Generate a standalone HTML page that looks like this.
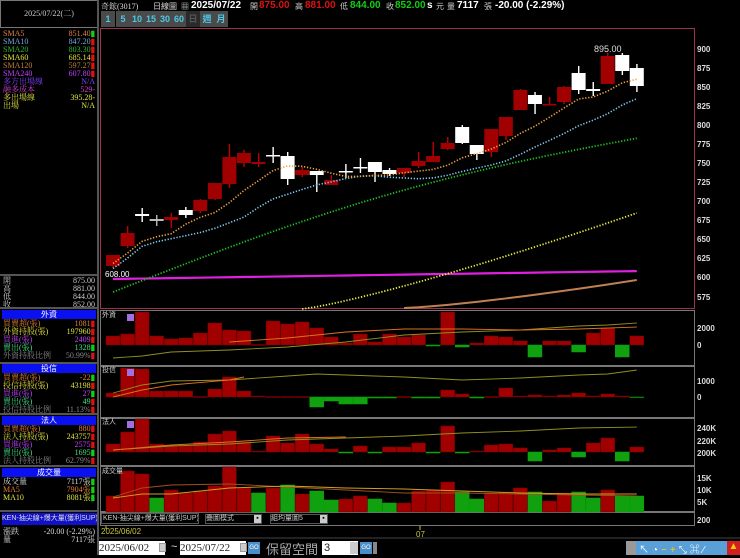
<!DOCTYPE html>
<html><head><meta charset="utf-8"><style>
*{margin:0;padding:0;box-sizing:border-box}
body{width:740px;height:555px;background:#000;overflow:hidden;position:relative;font-family:"Liberation Sans","Noto Sans CJK TC",sans-serif;font-size:8px;color:#ddd}
.a{position:absolute;white-space:nowrap}
.row{position:absolute;left:3px;width:92px;height:8px;line-height:8px;font-size:8px;font-family:"Liberation Serif","Noto Serif CJK SC",serif}
.row span{position:absolute;right:0}
.hd{position:absolute;left:2px;width:94px;height:9px;background:#0a10f0;color:#fff;text-align:center;font-size:8px;line-height:9px}
.sep{position:absolute;left:0;width:98px;height:2px;background:#555}
.btn{position:absolute;top:11px;height:16px;width:14px;background:#4a4a4a;color:#4ec8e8;font-size:9px;font-weight:bold;text-align:center;line-height:16px}
</style></head><body>
<div class="a" style="left:0;top:0;width:98px;height:28px;border:1px solid #777;color:#ccc;font-family:'Liberation Serif','Noto Serif CJK SC',serif;font-size:8px;text-align:center;line-height:26px">2025/07/22(二)</div>
<div class="a" style="left:97px;top:0;width:2px;height:555px;background:#555"></div>
<div id="left"></div>
<div class="sep" style="top:274px"></div>
<div class="sep" style="top:307px"></div>
<div class="sep" style="top:362px"></div>
<div class="sep" style="top:413px"></div>
<div class="sep" style="top:465px"></div>
<div class="sep" style="top:510px"></div>
<div class="hd" style="top:310px">外資</div>
<div class="hd" style="top:364px">投信</div>
<div class="hd" style="top:416px">法人</div>
<div class="hd" style="top:468px">成交量</div>
<div class="a" style="left:2px;top:513px;width:95px;height:12px;background:#1010c8;color:#ddd;font-size:7px;line-height:12px;overflow:hidden">KEN-抽尖線+爆大量(獲利SUP)</div>
<div class="a" style="left:101px;top:1px;font-size:8px;color:#ddd;font-family:'Liberation Serif','Noto Serif CJK SC',serif">奇鋐(3017)</div>
<div class="a" style="left:153px;top:1px;font-size:8px;color:#ddd">日線圖</div>
<div class="a" style="left:181px;top:1px;font-size:8px;color:#ddd">▦</div>
<div class="a" style="left:191px;top:0px;font-size:10px;font-weight:bold;color:#fff">2025/07/22</div>
<div class="a" style="left:250px;top:1px;font-size:8px;color:#ccc">開</div>
<div class="a" style="left:259px;top:0;font-size:10px;font-weight:bold;color:#e01010">875.00</div>
<div class="a" style="left:295px;top:1px;font-size:8px;color:#ccc">高</div>
<div class="a" style="left:305px;top:0;font-size:10px;font-weight:bold;color:#e01010">881.00</div>
<div class="a" style="left:340px;top:1px;font-size:8px;color:#ccc">低</div>
<div class="a" style="left:350px;top:0;font-size:10px;font-weight:bold;color:#10d010">844.00</div>
<div class="a" style="left:386px;top:1px;font-size:8px;color:#ccc">收</div>
<div class="a" style="left:395px;top:0;font-size:10px;font-weight:bold;color:#10d010">852.00</div>
<div class="a" style="left:427px;top:0;font-size:10px;font-weight:bold;color:#fff">s</div>
<div class="a" style="left:436px;top:1px;font-size:8px;color:#ccc">元</div>
<div class="a" style="left:447px;top:1px;font-size:8px;color:#ccc">量</div>
<div class="a" style="left:457px;top:0;font-size:10px;font-weight:bold;color:#fff">7117</div>
<div class="a" style="left:484px;top:1px;font-size:8px;color:#ccc">張</div>
<div class="a" style="left:495px;top:0;font-size:10px;font-weight:bold;color:#fff">-20.00 (-2.29%)</div>
<div class="btn" style="left:101px">1</div><div class="btn" style="left:116px">5</div>
<div class="btn" style="left:130px">10</div><div class="btn" style="left:144px">15</div>
<div class="btn" style="left:158px">30</div><div class="btn" style="left:172px">60</div>
<div class="btn" style="left:186px;background:#2a2a2a;color:#555">日</div>
<div class="btn" style="left:200px">週</div><div class="btn" style="left:214px">月</div>
<svg id="ch" class="a" style="left:0;top:0" width="740" height="555"></svg>
<div class="a" style="left:101px;top:513px;width:98px;height:11px;border:1px solid #555;color:#ccc;font-size:7px;line-height:9px;padding-left:1px;overflow:hidden">KEN-抽尖線+爆大量(獲利SUP)</div>
<div class="a" style="left:205px;top:514px;width:57px;height:10px;border:1px solid #555;color:#ccc;font-size:7px;line-height:8px">疊圖模式 <span style="float:right;background:#ccc;color:#000;width:7px;text-align:center">▪</span></div>
<div class="a" style="left:270px;top:514px;width:58px;height:10px;border:1px solid #555;color:#ccc;font-size:7px;line-height:8px">組均量圖5 <span style="float:right;background:#ccc;color:#000;width:7px;text-align:center">▪</span></div>
<div class="a" style="left:101px;top:527px;color:#c8c840;font-size:8px">2025/06/02</div>
<div class="a" style="left:416px;top:530px;color:#c8c840;font-size:8px">07</div>
<div class="a" style="left:99px;top:541px;width:66px;height:14px;background:#fff;color:#222;font-size:11px;line-height:14px;font-family:'Liberation Serif',serif">2025/06/02</div>
<div class="a" style="left:159px;top:543px;width:7px;height:9px;background:#ccc;border:1px solid #999"></div>
<div class="a" style="left:171px;top:541px;color:#ddd;font-size:11px">~</div>
<div class="a" style="left:180px;top:541px;width:66px;height:14px;background:#fff;color:#222;font-size:11px;line-height:14px;font-family:'Liberation Serif',serif">2025/07/22</div>
<div class="a" style="left:240px;top:543px;width:7px;height:9px;background:#ccc;border:1px solid #999"></div>
<div class="a" style="left:248px;top:542px;width:12px;height:12px;background:#4a90c8;color:#fff;font-size:6px;line-height:12px;text-align:center">GO</div>
<div class="a" style="left:266px;top:539px;color:#aaa;font-size:13px">保留空間</div>
<div class="a" style="left:322px;top:541px;width:36px;height:14px;background:#fff;color:#222;font-size:11px;line-height:14px;padding-left:2px">3</div>
<div class="a" style="left:350px;top:542px;width:8px;height:12px;background:#ccc"></div>
<div class="a" style="left:360px;top:542px;width:12px;height:12px;background:#4a90c8;color:#fff;font-size:6px;line-height:12px;text-align:center">GO</div>
<div class="a" style="left:373px;top:542px;width:4px;height:12px;background:#888"></div>
<div class="a" style="left:626px;top:541px;width:114px;height:14px;background:#5aa0d8"></div>
<div class="a" style="left:626px;top:541px;width:10px;height:14px;background:#999"></div>
<div class="a" style="left:727px;top:541px;width:13px;height:14px;background:#d02020;color:#fc0;font-size:10px;text-align:center">▲</div>
<div class="a" style="left:639px;top:541px;color:#fff;font-size:10px;letter-spacing:3px">↖◔<span style="color:#fc0">−+</span>⤡⌘⁄</div>
<script>
var L=document.getElementById('left'),h='';
function row(y,l,v,c,m,mc){h+='<div class="row" style="top:'+y+'px;color:'+c+'">'+l+'<span>'+v+(m?'<b style="color:'+mc+'">'+m+'</b>':'')+'</span></div>';}
var R='#e01010',G='#10d010';
row(30,'SMA5','851.40','#e08040','▮',G);row(38,'SMA10','847.20','#6fa8d8','▮',R);
row(46,'SMA20','803.30','#2db82d','▮',R);row(54,'SMA60','685.14','#e0e040','▮',R);
row(62,'SMA120','597.27','#c08040','▮',R);row(70,'SMA240','607.80','#c040ff','▮',R);
row(78,'多方出場線','N/A','#8040ff');row(86,'融多成本','529-','#d040d0');
row(94,'多出場線','395.28-','#e0e040');row(102,'出場','N/A','#e0e040');
row(277,'開','875.00','#ccc');row(285,'高','881.00','#ccc');row(293,'低','844.00','#ccc');row(301,'收','852.00','#ccc');
row(320,'買賣超(張)','1081','#e08030','▮',R);row(328,'外資持股(張)','197960','#e0e040','▮',R);
row(336,'買進(張)','2409','#c040ff','▮',R);row(344,'賣出(張)','1328','#40e080','▮',G);row(352,'外資持股比例','50.99%','#888','▮',R);
row(374,'買賣超(張)','-22','#e08030','▮',G);row(382,'投信持股(張)','43198','#e0e040','▮',R);
row(390,'買進(張)','27','#c040ff','▮',G);row(398,'賣出(張)','49','#40e080','▮',R);row(406,'投信持股比例','11.13%','#888','▮',R);
row(425,'買賣超(張)','880','#e08030','▮',R);row(433,'法人持股(張)','243757','#e0e040','▮',R);
row(441,'買進(張)','2575','#c040ff','▮',R);row(449,'賣出(張)','1695','#40e080','▮',G);row(457,'法人持股比例','62.79%','#888','▮',R);
row(478,'成交量','7117張','#ddd','▮',G);row(486,'MA5','7904張','#e08030','▮',G);row(494,'MA10','8081張','#e0e040','▮',G);
row(528,'漲跌','-20.00 (-2.29%)','#ddd');row(536,'量','7117張','#ddd');
L.innerHTML=h;
var S='';
function r(x,y,w,hh,c,ex){S+='<rect x="'+x+'" y="'+y+'" width="'+w+'" height="'+hh+'" fill="'+c+'" '+(ex||'')+'/>';}
function t(x,y,s,c,fs,ex){S+='<text x="'+x+'" y="'+y+'" fill="'+c+'" font-size="'+(fs||8)+'" font-family="Liberation Sans,Noto Sans CJK TC,sans-serif" '+(ex||'')+'>'+s+'</text>';}
function pl(p,c,dash,w){S+='<polyline fill="none" stroke="'+c+'" stroke-width="'+(w||1.3)+'" '+(dash?'stroke-dasharray="1.3 1.7"':'')+' points="'+p.map(function(q){return q.join(',')}).join(' ')+'"/>';}
S+='<rect x="100.5" y="28.5" width="594" height="280" fill="none" stroke="#a03050"/>';
[[310,366],[366,418],[418,466],[466,512]].forEach(function(p){S+='<rect x="100.5" y="'+(p[0]+.5)+'" width="594" height="'+(p[1]-p[0]-1)+'" fill="none" stroke="#777"/>';});
S+='<rect x="100.5" y="512.5" width="594" height="13" fill="none" stroke="#777"/>';
var ax=[[900,52],[875,71],[850,90],[825,109],[800,128],[775,147],[750,166],[725,185],[700,204],[675,223],[650,242],[625,261],[600,280],[575,300],
['2000',331],['0',348],['1000',384],['0',400],['240K',431],['220K',444],['200K',456],['15K',481],['10K',493],['5K',505],['200',523]];
ax.forEach(function(a){t(697,a[1],a[0],'#ddd',8,'font-weight="bold"')});
var C=[['r',255,266,255,268],['r',233,246,226,248],['w',214,216,208,222],['g',219,221,215,226],['r',217,220,213,228],['w',210,215,207,218],['r',200,211,199,213],['r',183,199,183,200],['r',157,184,144,188],['r',153,163,150,167],['r',162,164,153,167],['w',155,156,147,163],['w',156,179,152,185],['r',170,175,167,177],['w',171,175,171,192],['r',180,185,175,185],['w',171,172,164,178],['w',167,168,158,173],['w',162,172,162,182],['w',170,174,168,176],['r',168,173,168,177],['r',161,166,152,168],['r',156,162,142,162],['r',143,149,137,150],['w',127,143,125,144],['w',145,154,145,160],['r',129,152,129,157],['r',117,136,117,140],['r',90,110,89,110],['w',95,104,92,114],['r',104,105,97,105],['r',87,102,86,104],['w',73,90,66,94],['w',89,91,82,96],['r',56,84,53,84],['w',55,71,53,75],['w',68,86,64,92]];
var X=function(i){return 113+i*14.55};
var mid=C.map(function(c){return (c[1]+c[2])/2});
function ma(n){var o=[];for(var i=0;i<C.length;i++){var k=Math.max(0,i-n+1),s=0;for(var j=k;j<=i;j++)s+=mid[j];o.push([X(i),s/(i-k+1)+(n==5?3:n==10?8:0)]);}return o;}
var g=[],y6=[],b=[],m=[];
for(var i=0;i<C.length;i++){var x=X(i);g.push([x,292-i*4.2-Math.sin(i/36*3)*18]);m.push([x,279-i*0.22]);
 if(i>=13)y6.push([x,309-Math.pow((i-13)/23,1.2)*96]);if(i>=20)b.push([x,308-Math.pow((i-20)/16,1.3)*28]);}
pl(m,'#e020e0',0,2.2);pl(b,'#c08050',0,2);pl(y6,'#e8e840',1,1.8);pl(g,'#20c020',1,1.8);
var m10=ma(10),m5=ma(5);
C.forEach(function(c,i){var x=X(i),col=c[0]=='r'?'#a00000':(c[0]=='g'?'#bbb':'#fff');
 r(x-0.6,c[3],1.4,c[4]-c[3],c[0]=='r'?'#c00000':col);r(x-7,c[1],14,Math.max(1.5,c[2]-c[1]),col);});
pl(m10,'#80c8f0',1,1.6);pl(m5,'#f0a040',1,1.6);
t(594,52,'895.00','#ddd',9);t(105,277,'608.00','#fff',8);
function bars(z,arr,sc){arr.forEach(function(v,i){var x=X(i);if(v>=0)r(x-7,z-v*sc,14,Math.max(v*sc,1),'#a00000','stroke="#600" stroke-width=".5"');else r(x-7,z,14,-v*sc,'#10a010','stroke="#0a0" stroke-width=".5"');});}
var F=[9,11,33,9,6,7,12,22,15,14,0.5,24,21,23,17,8,2,11,3,11,8,10,-1,33,-2,2,9,8,4,-12,4,4,-7,12,17,-12,9];
var T=[4,29,28,6,6,6,.5,8,20,6,1,.5,.5,.5,-10,-4,-7,-7,-1,-1,.5,-1,-1,7,3,-1,.5,9,1,2,1,2,4,1,3,1,-.5];
var Lg=[8,20,33,8,6,6,10,18,21,10,1,16,9,18,8,3,-1,6,-1,5,5,9,-1,26,-1,1,7,8,4,-9,2,4,-5,9,14,-9,5];
var V=[16,41,38,-14,22,19,21,26,45,24,-19,24,-27,18,-21,-12,13,16,-13,-9,9,21,22,30,-20,-13,19,20,24,-20,11,19,-20,-14,22,-16,-16];
bars(345,F,1);bars(397,T,1);bars(452,Lg,1);
V.forEach(function(v,i){var x=X(i);r(x-7,512-Math.abs(v),14,Math.abs(v),v>0?'#a00000':'#10a010','stroke="'+(v>0?'#600':'#0a0')+'" stroke-width=".5"');});
function line(z,pts,c){pl(pts.map(function(p){return [X(p[0]),p[1]]}),c,0,0.9);}
line(0,[[0,358],[2,356],[4,352],[8,350],[12,347],[16,342],[20,335],[24,332],[28,330],[32,326],[34,325],[36,323]],'#909020');
line(0,[[8,342],[12,338],[16,332],[20,329],[24,329],[28,330],[32,329],[36,327]],'#e07020');
line(0,[[0,393],[2,385],[4,381],[8,380],[12,376],[14,374],[16,375],[20,377],[24,380],[28,378],[32,375],[34,374],[36,370]],'#909020');
line(0,[[0,397],[2,390],[4,385],[8,380],[9,377]],'#e07020');
line(0,[[0,450],[4,446],[8,444],[12,440],[16,438],[20,436],[24,433],[28,431],[32,428],[36,427]],'#909020');
line(0,[[0,450],[4,445],[8,442],[12,438],[16,437]],'#e07020');
line(0,[[0,497],[2,488],[4,485],[8,484],[12,487],[16,490],[20,493],[24,493],[28,494],[32,495],[36,496]],'#a05020');
line(0,[[0,498],[2,494],[4,494],[8,488],[12,486],[16,488],[20,489],[24,491],[28,493],[32,494],[36,494]],'#d0a020');
t(102,317,'外資','#ccc',7);t(102,372,'投信','#ccc',7);t(102,424,'法人','#ccc',7);t(102,473,'成交量','#ccc',7);
[[127,314],[127,369],[127,421]].forEach(function(p){r(p[0],p[1],7,7,'#a070e0');});
S+='<line x1="420" y1="526" x2="420" y2="530" stroke="#c8c840"/><line x1="106" y1="526" x2="106" y2="529" stroke="#c8c840"/>';
S+='<line x1="99" y1="538" x2="740" y2="538" stroke="#444"/>';
document.getElementById('ch').innerHTML=S;
</script>
</body></html>
